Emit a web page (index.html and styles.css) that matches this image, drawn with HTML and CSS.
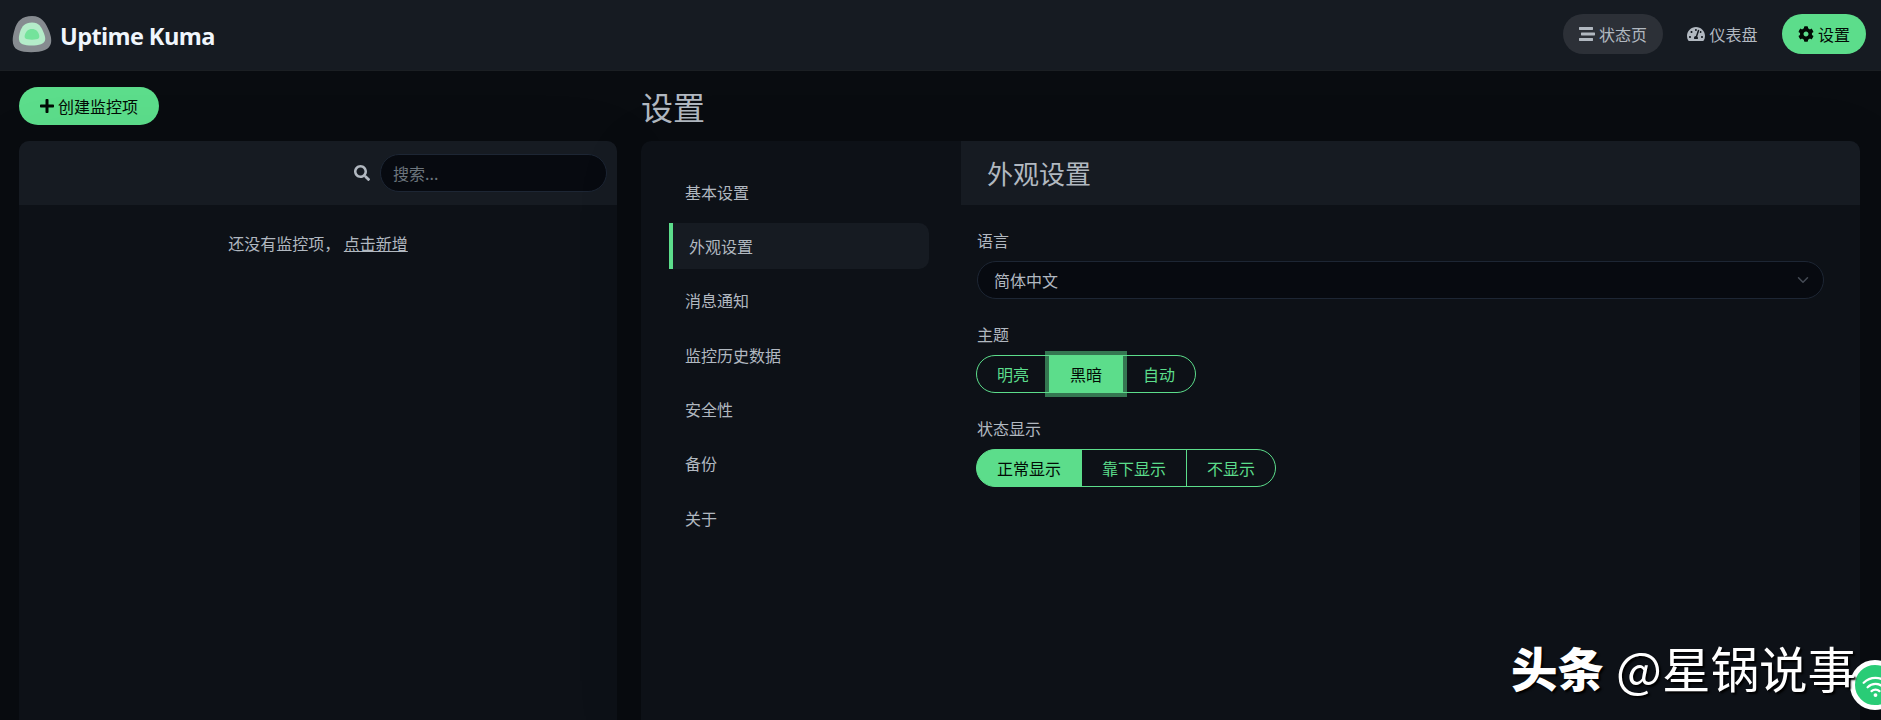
FILE: index.html
```html
<!DOCTYPE html>
<html lang="zh-CN">
  <head>
    <meta charset="UTF-8" />
    <meta name="viewport" content="width=device-width, initial-scale=1.0" />
    <title>Uptime Kuma</title>
    <link rel="stylesheet" href="styles.css">
  </head>
  <body>
    <header class="header">
      <a class="brand">
        <svg class="logo" viewBox="0 0 40 38">
          <path fill="#868b90" d="M20 1C30 1 34 8 37.500 17C41 27 39 32 33 35C26 38 12 38 6 35C0 32 -0.500 25 2.500 15C5 6 10 1 20 1Z" />
          <path fill="#b4ecc9" d="M20 7.500C27 7.500 29.500 12 32 18.500C34.500 25 33 27.500 29 29.300C24 31 15 31 10.500 29.300C6.500 27.500 6 23 8 17C10 11 13 7.500 20 7.500Z" />
          <path fill="#74e39b" d="M13.500 23.500C11.500 22 13.500 17.500 15.200 15.800C17.500 13.500 22.500 13.500 24.800 15.800C26.500 17.500 28.500 22 26.500 23.500C25 25 15 25 13.500 23.500Z" />
        </svg>
        <span class="title">Uptime Kuma</span>
      </a>
      <nav class="nav">
        <a class="nav-link status-page">
          <svg class="icon" viewBox="0 0 512 512"><path d="M16 128h416c8.840 0 16-7.160 16-16V48c0-8.840-7.160-16-16-16H16C7.160 32 0 39.160 0 48v64c0 8.840 7.160 16 16 16zm480 80H80c-8.840 0-16 7.160-16 16v64c0 8.840 7.160 16 16 16h416c8.840 0 16-7.160 16-16v-64c0-8.840-7.160-16-16-16zm-64 176H16c-8.840 0-16 7.160-16 16v64c0 8.840 7.160 16 16 16h416c8.840 0 16-7.160 16-16v-64c0-8.840-7.160-16-16-16z" /></svg>
          <span>状态页</span>
        </a>
        <a class="nav-link">
          <svg class="icon wide" viewBox="0 0 576 512"><path d="M288 32C128.940 32 0 160.940 0 320c0 52.800 14.250 102.260 39.060 144.800 5.610 9.620 16.300 15.200 27.440 15.200h443c11.140 0 21.830-5.580 27.440-15.200C561.750 422.260 576 372.800 576 320c0-159.060-128.940-288-288-288zm0 64c14.710 0 26.580 10.130 30.320 23.650-1.110 2.260-2.640 4.230-3.450 6.670l-9.220 27.670c-5.130 3.490-10.970 6.010-17.640 6.010-17.670 0-32-14.330-32-32S270.330 96 288 96zM96 384c-17.670 0-32-14.330-32-32s14.330-32 32-32 32 14.330 32 32-14.330 32-32 32zm48-160c-17.670 0-32-14.330-32-32s14.330-32 32-32 32 14.330 32 32-14.330 32-32 32zm246.770-72.410l-61.330 184C343.130 347.330 352 364.540 352 384c0 11.720-3.380 22.550-8.880 32H232.880c-5.500-9.450-8.880-20.280-8.880-32 0-33.940 26.500-61.430 59.900-63.590l61.340-184.010c4.170-12.560 17.730-19.450 30.360-15.170 12.570 4.190 19.350 17.790 15.170 30.360zm14.660 57.200l15.520-46.550c3.470-1.290 7.130-2.230 11.050-2.230 17.670 0 32 14.330 32 32s-14.330 32-32 32c-11.380-.010-20.890-6.280-26.570-15.220zM480 384c-17.670 0-32-14.330-32-32s14.330-32 32-32 32 14.330 32 32-14.330 32-32 32z" /></svg>
          <span>仪表盘</span>
        </a>
        <a class="nav-link active">
          <svg class="icon" viewBox="0 0 512 512"><path d="M487.400 315.700l-42.600-24.600c4.300-23.200 4.300-47 0-70.200l42.600-24.600c4.900-2.800 7.100-8.600 5.500-14-11.100-35.600-30-67.800-54.700-94.600-3.800-4.100-10-5.100-14.800-2.300L380.800 110c-17.900-15.400-38.500-27.300-60.800-35.100V25.800c0-5.600-3.900-10.500-9.400-11.700-36.700-8.200-74.300-7.800-109.200 0-5.500 1.200-9.400 6.100-9.400 11.700V75c-22.200 7.900-42.800 19.800-60.800 35.100L88.700 85.500c-4.900-2.800-11-1.900-14.800 2.300-24.700 26.700-43.600 58.900-54.700 94.600-1.700 5.400.6 11.200 5.500 14L67.300 221c-4.300 23.200-4.300 47 0 70.200l-42.600 24.600c-4.900 2.800-7.100 8.600-5.500 14 11.100 35.600 30 67.800 54.700 94.600 3.800 4.100 10 5.100 14.800 2.300l42.600-24.600c17.900 15.400 38.500 27.300 60.800 35.100v49.200c0 5.600 3.900 10.500 9.400 11.700 36.700 8.200 74.300 7.800 109.200 0 5.500-1.200 9.400-6.100 9.400-11.700v-49.200c22.200-7.900 42.800-19.800 60.800-35.100l42.600 24.600c4.900 2.800 11 1.900 14.800-2.300 24.700-26.700 43.600-58.900 54.700-94.600 1.500-5.500-.7-11.300-5.600-14.100zM256 336c-44.100 0-80-35.900-80-80s35.900-80 80-80 80 35.900 80 80-35.900 80-80 80z" /></svg>
          <span>设置</span>
        </a>
      </nav>
    </header>

    <main class="main">
      <section class="left">
        <button class="add-btn">
          <svg class="icon narrow" viewBox="0 0 448 512"><path d="M416 208H272V64c0-17.670-14.330-32-32-32h-32c-17.670 0-32 14.330-32 32v144H32c-17.670 0-32 14.330-32 32v32c0 17.670 14.330 32 32 32h144v144c0 17.670 14.330 32 32 32h32c17.670 0 32-14.330 32-32V304h144c17.670 0 32-14.330 32-32v-32c0-17.670-14.330-32-32-32z" /></svg>
          <span>创建监控项</span>
        </button>
        <div class="box monitor-list">
          <div class="list-header">
            <svg class="icon" viewBox="0 0 512 512"><path d="M505 442.700L405.300 343c-4.500-4.500-10.600-7-17-7H372c27.600-35.300 44-79.700 44-128C416 93.100 322.900 0 208 0S0 93.100 0 208s93.100 208 208 208c48.300 0 92.700-16.400 128-44v16.300c0 6.400 2.500 12.500 7 17l99.700 99.700c9.400 9.400 24.600 9.400 33.900 0l28.300-28.300c9.400-9.400 9.400-24.600.1-34zM208 336c-70.700 0-128-57.200-128-128 0-70.700 57.200-128 128-128 70.700 0 128 57.200 128 128 0 70.700-57.200 128-128 128z" /></svg>
            <input class="search" type="text" placeholder="搜索..." />
          </div>
          <p class="empty">还没有监控项， <a class="add-link">点击新增</a></p>
        </div>
      </section>

      <section class="right">
        <h1>设置</h1>
        <div class="box settings">
          <div class="menu">
            <a class="menu-item">基本设置</a>
            <a class="menu-item active">外观设置</a>
            <a class="menu-item">消息通知</a>
            <a class="menu-item">监控历史数据</a>
            <a class="menu-item">安全性</a>
            <a class="menu-item">备份</a>
            <a class="menu-item">关于</a>
          </div>
          <div class="content">
            <h2>外观设置</h2>
            <div class="form">
              <div class="field">
                <div class="label">语言</div>
                <div class="select">
                  <span>简体中文</span>
                  <svg class="chevron" viewBox="0 0 16 16"><path d="M2 5l6 6 6-6" /></svg>
                </div>
              </div>
              <div class="field">
                <div class="label">主题</div>
                <div class="btn-group">
                  <button class="btn">明亮</button>
                  <button class="btn checked focus">黑暗</button>
                  <button class="btn">自动</button>
                </div>
              </div>
              <div class="field">
                <div class="label">状态显示</div>
                <div class="btn-group">
                  <button class="btn checked">正常显示</button>
                  <button class="btn">靠下显示</button>
                  <button class="btn">不显示</button>
                </div>
              </div>
            </div>
          </div>
        </div>
      </section>
    </main>

    <div class="wifi">
      <svg viewBox="0 0 24 24">
        <path d="M1.500 9.500a15 15 0 0 1 21 0M5 13.500a10 10 0 0 1 14 0M8.500 17a5 5 0 0 1 7 0" />
        <circle cx="12" cy="20.500" r="1.700" />
      </svg>
    </div>
    <div class="watermark"><b>头条</b><span>@星锅说事</span></div>
  </body>
</html>
```

FILE: styles.css
```css
* {
  margin: 0;
  padding: 0;
  box-sizing: border-box;
}
body {
  height: 100vh;
  display: flex;
  flex-direction: column;
  overflow: hidden;
  position: relative;
  background-color: #090c10;
  color: #b1b8c0;
  font-family: "Noto Sans CJK SC", sans-serif;
  font-size: 16px;
  line-height: 24px;
}
button,
input {
  font: inherit;
}
.icon {
  width: 16px;
  height: 16px;
  fill: currentColor;
}
.icon.wide {
  width: 18px;
}
.icon.narrow {
  width: 14px;
}

/* top bar */
.header {
  height: 71px;
  flex-shrink: 0;
  display: flex;
  justify-content: space-between;
  align-items: flex-start;
  padding: 14px 15px 0 12px;
  background-color: #161b22;
  border-bottom: 1px solid #1b1f23;
}
.brand {
  display: flex;
  align-items: center;
  gap: 8px;
  height: 40px;
}
.logo {
  width: 40px;
  height: 38px;
}
.title {
  padding-top: 3px;
  color: #f0f6fc;
  font-family: "Open Sans", "Noto Sans", sans-serif;
  font-size: 23.5px;
  font-weight: 700;
  letter-spacing: -0.6px;
}
.nav {
  display: flex;
  gap: 8.5px;
}
.nav-link {
  display: flex;
  align-items: center;
  gap: 4px;
  height: 40px;
  padding: 0 16px;
  border-radius: 20px;
}
.status-page {
  background-color: #2c3037;
}
.nav-link.active {
  background-color: #5cdd8b;
  color: #020b05;
}

.main {
  flex: 1;
  min-height: 0;
  display: flex;
  gap: 24px;
  padding: 16px 21px 0 19px;
}
.left {
  width: 598px;
  display: flex;
  flex-direction: column;
  align-items: flex-start;
}
.add-btn {
  display: flex;
  align-items: center;
  gap: 4px;
  height: 38px;
  margin-bottom: 16px;
  padding: 0 21px;
  border: none;
  border-radius: 19px;
  background-color: #5cdd8b;
  color: #020b05;
}
.box {
  flex: 1;
  width: 100%;
  border-radius: 10px 10px 0 0;
  background-color: #0d1117;
  box-shadow: 0 15px 70px rgba(0, 0, 0, 0.1);
  overflow: hidden;
}
.list-header {
  display: flex;
  justify-content: flex-end;
  align-items: center;
  gap: 10px;
  height: 64px;
  padding-right: 10px;
  background-color: #161b22;
}
.search {
  width: 227px;
  height: 38px;
  padding: 0 12px;
  border: 1px solid #1d2634;
  border-radius: 19px;
  background-color: #070a10;
  color: #b1b8c0;
  outline: none;
}
.search::placeholder {
  color: #6c757d;
}
.empty {
  margin-top: 26px;
  text-align: center;
}
.add-link {
  text-decoration: underline;
}

/* settings */
.right {
  flex: 1;
  display: flex;
  flex-direction: column;
}
h1 {
  margin-bottom: 16px;
  font-size: 32px;
  font-weight: 400;
  line-height: 38px;
}
.settings {
  display: flex;
}
.menu {
  width: 320px;
  padding: 28px 32px 0 28px;
}
.menu-item {
  display: block;
  margin-bottom: 8.4px;
  padding: 10.6px 16px 11.4px;
}
.menu-item.active {
  border-left: 4px solid #5cdd8b;
  border-radius: 0 10px 10px 0;
  background-color: #161b22;
}
.content {
  flex: 1;
}
h2 {
  height: 64px;
  padding-left: 26px;
  background-color: #161b22;
  font-size: 26px;
  font-weight: 400;
  line-height: 63px;
}
.form {
  padding: 23px 36px 0 15px;
}
.field {
  margin-bottom: 23px;
}
.label {
  margin-bottom: 9px;
  padding-left: 1px;
}
.select {
  display: flex;
  justify-content: space-between;
  align-items: center;
  height: 38px;
  margin-left: 1px;
  padding: 0 14px 0 16px;
  border: 1px solid #1d2634;
  border-radius: 19px;
  background-color: #070a10;
}
.chevron {
  width: 12px;
  height: 12px;
  fill: none;
  stroke: #454b55;
  stroke-width: 2;
  stroke-linecap: round;
  stroke-linejoin: round;
}
.btn-group {
  display: flex;
}
.btn {
  height: 38px;
  padding: 0 20px;
  border: 1px solid #5cdd8b;
  background: none;
  color: #5cdd8b;
}
.btn + .btn {
  margin-left: -1px;
}
.btn:first-child {
  border-radius: 19px 0 0 19px;
}
.btn:last-child {
  border-radius: 0 19px 19px 0;
}
.btn.checked {
  background-color: #5cdd8b;
  color: #020b05;
}
.btn.focus {
  z-index: 1;
  box-shadow: 0 0 0 4px rgba(92, 221, 139, 0.5);
}

/* floating things in the corner */
.wifi {
  position: absolute;
  top: 660px;
  left: 1850px;
  width: 50px;
  height: 50px;
  display: flex;
  justify-content: center;
  align-items: center;
  border: 5px solid #fff;
  border-radius: 50%;
  background-color: #29cc76;
}
.wifi svg {
  width: 27px;
  height: 27px;
  flex-shrink: 0;
  fill: none;
  stroke: #fff;
  stroke-width: 2;
  stroke-linecap: round;
}
.wifi circle {
  fill: #fff;
  stroke: none;
}
.watermark {
  position: absolute;
  top: 637px;
  left: 1511px;
  display: flex;
  gap: 12px;
  color: #fff;
  font-size: 48.5px;
  line-height: 60px;
  white-space: nowrap;
  text-shadow: 2px 2px 2px #000;
}
.watermark b {
  font-size: 46.5px;
  font-weight: 900;
}
```
